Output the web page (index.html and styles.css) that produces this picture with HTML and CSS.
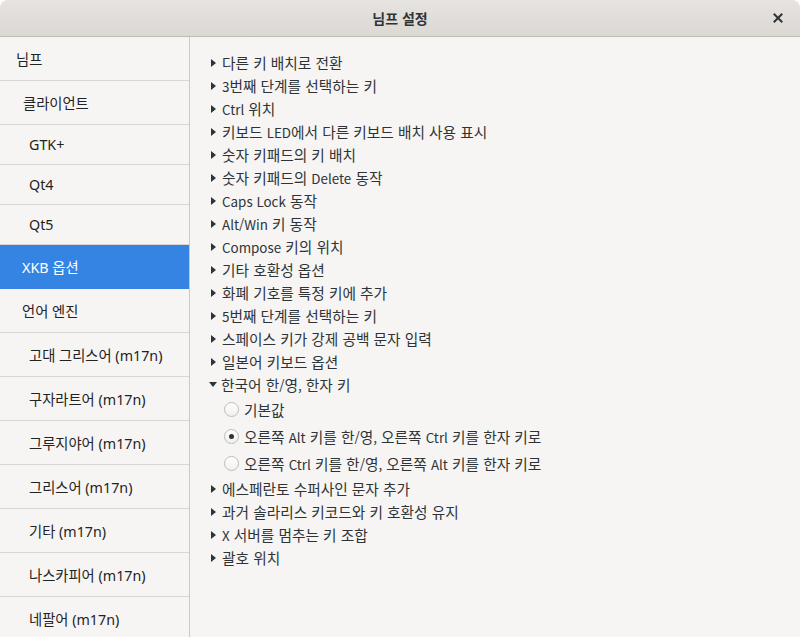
FILE: index.html
```html
<!DOCTYPE html>
<html lang="ko">
<head>
<meta charset="utf-8">
<link rel="stylesheet" href="styles.css">
</head>
<body>
<div class="window">
  <div class="titlebar">
    <div class="title">님프 설정</div>
    <div class="close">
      <svg width="10" height="10" viewBox="0 0 10 10"><path d="M1.5 1.5 L8.5 8.5 M8.5 1.5 L1.5 8.5" stroke="#2e3436" stroke-width="2" stroke-linecap="square"/></svg>
    </div>
  </div>
  <div class="main">
    <div class="sidebar">
      <div class="row tall lv0">님프</div>
      <div class="row tall lv1">클라이언트</div>
      <div class="row short lv2">GTK+</div>
      <div class="row short lv2">Qt4</div>
      <div class="row short lv2">Qt5</div>
      <div class="row tall lv1b selected">XKB 옵션</div>
      <div class="row tall lv1b">언어 엔진</div>
      <div class="row tall lv2">고대 그리스어 (m17n)</div>
      <div class="row tall lv2">구자라트어 (m17n)</div>
      <div class="row tall lv2">그루지야어 (m17n)</div>
      <div class="row tall lv2">그리스어 (m17n)</div>
      <div class="row tall lv2">기타 (m17n)</div>
      <div class="row tall lv2">나스카피어 (m17n)</div>
      <div class="row tall lv2">네팔어 (m17n)</div>
    </div>
    <div class="content">
      <div class="opt"><span class="arrow"></span>다른 키 배치로 전환</div>
      <div class="opt"><span class="arrow"></span><span class="l">3</span>번째 단계를 선택하는 키</div>
      <div class="opt"><span class="arrow"></span><span class="l">Ctrl</span> 위치</div>
      <div class="opt"><span class="arrow"></span>키보드 <span class="l">LED</span>에서 다른 키보드 배치 사용 표시</div>
      <div class="opt"><span class="arrow"></span>숫자 키패드의 키 배치</div>
      <div class="opt"><span class="arrow"></span>숫자 키패드의 <span class="l">Delete</span> 동작</div>
      <div class="opt"><span class="arrow"></span><span class="l">Caps Lock</span> 동작</div>
      <div class="opt"><span class="arrow"></span><span class="l">Alt/Win</span> 키 동작</div>
      <div class="opt"><span class="arrow"></span><span class="l">Compose</span> 키의 위치</div>
      <div class="opt"><span class="arrow"></span>기타 호환성 옵션</div>
      <div class="opt"><span class="arrow"></span>화폐 기호를 특정 키에 추가</div>
      <div class="opt"><span class="arrow"></span><span class="l">5</span>번째 단계를 선택하는 키</div>
      <div class="opt"><span class="arrow"></span>스페이스 키가 강제 공백 문자 입력</div>
      <div class="opt"><span class="arrow"></span>일본어 키보드 옵션</div>
      <div class="opt"><span class="arrow down"></span>한국어 한<span class="l">/</span>영<span class="l">,</span> 한자 키</div>
      <div class="radio"><span class="circle"></span>기본값</div>
      <div class="radio"><span class="circle checked"></span>오른쪽 <span class="l">Alt</span> 키를 한<span class="l">/</span>영<span class="l">,</span> 오른쪽 <span class="l">Ctrl</span> 키를 한자 키로</div>
      <div class="radio"><span class="circle"></span>오른쪽 <span class="l">Ctrl</span> 키를 한<span class="l">/</span>영<span class="l">,</span> 오른쪽 <span class="l">Alt</span> 키를 한자 키로</div>
      <div class="opt"><span class="arrow"></span>에스페란토 수퍼사인 문자 추가</div>
      <div class="opt"><span class="arrow"></span>과거 솔라리스 키코드와 키 호환성 유지</div>
      <div class="opt"><span class="arrow"></span><span class="l">X</span> 서버를 멈추는 키 조합</div>
      <div class="opt"><span class="arrow"></span>괄호 위치</div>
    </div>
  </div>
</div>
</body>
</html>
```

FILE: styles.css
```css
* { box-sizing: border-box; }
html, body {
  margin: 0;
  padding: 0;
  width: 800px;
  height: 637px;
  overflow: hidden;
  background: #ffffff;
}
body {
  font-family: "Noto Sans", "Noto Sans CJK KR", sans-serif;
  color: #2e3436;
}
.window {
  width: 800px;
  height: 637px;
  display: flex;
  flex-direction: column;
  background: #f6f5f4;
  border-radius: 8px 8px 0 0;
  overflow: hidden;
}
.titlebar {
  height: 37px;
  flex: none;
  background: linear-gradient(#e6e3e0, #dcd8d4);
  border-bottom: 1px solid #c0bcb7;
  display: flex;
  align-items: center;
  justify-content: center;
  position: relative;
}
.title {
  font-family: "Noto Sans CJK KR", sans-serif;
  font-weight: bold;
  font-size: 14px;
  color: #2e3436;
}
.close {
  position: absolute;
  right: 17px;
  top: 13px;
  width: 10px;
  height: 10px;
  display: flex;
}
.main {
  flex: 1;
  display: flex;
  min-height: 0;
}
.sidebar {
  width: 190px;
  flex: none;
  border-right: 1px solid #cdc9c5;
  background: #f6f5f4;
  display: flex;
  flex-direction: column;
  overflow: hidden;
}
.row {
  flex: none;
  display: flex;
  align-items: center;
  border-bottom: 1px solid #dad7d3;
  font-size: 14.3px;
  color: #1f2324;
  white-space: pre;
}
.row.tall { height: 44px; }
.row.short { height: 40px; }
.lv0 { padding-left: 16px; }
.lv1 { padding-left: 23px; }
.lv1b { padding-left: 22px; }
.lv2 { padding-left: 29px; }
.row.selected {
  background: #3584e4;
  color: #ffffff;
  border-bottom-color: #3584e4;
}
.content {
  flex: 1;
  padding: 14px 0 0 0;
  font-family: "Noto Sans CJK KR", sans-serif;
  font-size: 14.7px;
}
.l {
  font-size: 13.4px;
}
.opt {
  height: 23px;
  display: flex;
  align-items: center;
  padding-left: 20px;
  white-space: pre;
}
.arrow {
  width: 0;
  height: 0;
  border-top: 4px solid transparent;
  border-bottom: 4px solid transparent;
  border-left: 5px solid #2e3436;
  margin-right: 6px;
  margin-left: 1px;
}
.arrow.down {
  border-left: 4px solid transparent;
  border-right: 4px solid transparent;
  border-top: 5px solid #2e3436;
  border-bottom: 0;
  margin-left: -1px;
  margin-right: 4px;
}
.radio {
  height: 27px;
  display: flex;
  align-items: center;
  padding-left: 34px;
  white-space: pre;
}
.circle {
  width: 15px;
  height: 15px;
  border-radius: 50%;
  border: 1px solid #bfbcb7;
  background: linear-gradient(#ffffff, #f1f0ee);
  margin-right: 5px;
  display: flex;
  align-items: center;
  justify-content: center;
}
.circle.checked::after {
  content: "";
  width: 5px;
  height: 5px;
  border-radius: 50%;
  background: #2e3436;
}
```
